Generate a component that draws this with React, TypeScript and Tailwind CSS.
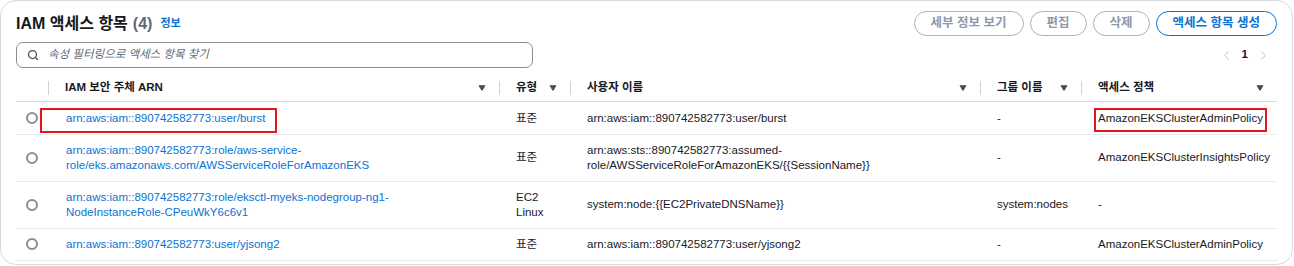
import React from 'react';
import { Search, ChevronLeft, ChevronRight } from 'lucide-react';

const cols = 'grid grid-cols-[32px_451px_71px_410px_101px_1fr]';

const SortIcon = () => (
  <svg width="8" height="8" viewBox="0 0 8 8" className="shrink-0">
    <polygon points="1.2,1.8 6.8,1.8 4,6.2" fill="#414d5c" stroke="#414d5c" strokeWidth="1.1" strokeLinejoin="round" />
  </svg>
);

const HeaderCell = ({ label, sortable = true }: { label: string; sortable?: boolean }) => (
  <div className="flex items-center">
    <span className="h-[14px] w-px bg-[#d1d5db]" />
    <span className="flex-1 pl-4 font-bold text-[#16191f]">{label}</span>
    {sortable && <span className="mr-[13px] flex"><SortIcon /></span>}
  </div>
);

const rows = [
  {
    arn: ['arn:aws:iam::890742582773:user/burst'],
    type: ['표준'],
    user: ['arn:aws:iam::890742582773:user/burst'],
    group: '-',
    policy: 'AmazonEKSClusterAdminPolicy',
  },
  {
    arn: ['arn:aws:iam::890742582773:role/aws-service-', 'role/eks.amazonaws.com/AWSServiceRoleForAmazonEKS'],
    type: ['표준'],
    user: ['arn:aws:sts::890742582773:assumed-', 'role/AWSServiceRoleForAmazonEKS/{{SessionName}}'],
    group: '-',
    policy: 'AmazonEKSClusterInsightsPolicy',
  },
  {
    arn: ['arn:aws:iam::890742582773:role/eksctl-myeks-nodegroup-ng1-', 'NodeInstanceRole-CPeuWkY6c6v1'],
    type: ['EC2', 'Linux'],
    user: ['system:node:{{EC2PrivateDNSName}}'],
    group: 'system:nodes',
    policy: '-',
  },
  {
    arn: ['arn:aws:iam::890742582773:user/yjsong2'],
    type: ['표준'],
    user: ['arn:aws:iam::890742582773:user/yjsong2'],
    group: '-',
    policy: 'AmazonEKSClusterAdminPolicy',
  },
];

const Lines = ({ lines }: { lines: string[] }) => (
  <div>
    {lines.map((l, i) => (
      <div key={i}>{l}</div>
    ))}
  </div>
);

export default function App() {
  return (
    <div
      className="relative h-[265px] w-[1293px] overflow-hidden rounded-[16px] border border-[#d5dbdb] bg-white px-[15px] pt-[10px] text-[11.5px] text-[#16191f]"
      style={{ fontFamily: '"Liberation Sans", "Noto Sans CJK KR", sans-serif' }}
    >
      {/* title */}
      <div className="flex h-[25px] items-center justify-between">
        <div className="flex items-center">
          <h2 className="text-[16px] font-bold leading-none text-[#16191f]">IAM 액세스 항목</h2>
          <span className="ml-[5px] text-[16px] font-bold leading-none text-[#5f6b7a]">(4)</span>
          <a className="ml-[8px] text-[11px] font-bold text-[#0972d3]">정보</a>
        </div>
        <div className="flex items-center gap-[6px]">
          {['세부 정보 보기', '편집', '삭제'].map((b) => (
            <button key={b} className="h-[25px] rounded-full border border-[#a8b1bd] px-[16px] text-[12.5px] font-bold text-[#8d99a8]">
              {b}
            </button>
          ))}
          <button className="h-[25px] rounded-full border-[1.5px] border-[#0972d3] px-[16px] text-[12.5px] font-bold text-[#0972d3]">
            액세스 항목 생성
          </button>
        </div>
      </div>

      {/* search + pagination */}
      <div className="mt-[6px] flex h-[26px] items-center justify-between">
        <div className="flex h-[26px] w-[517px] items-center rounded-[7px] border border-[#8c8c94] pl-[10px]">
          <Search size={12} strokeWidth={2.5} color="#414d5c" />
          <span className="ml-[9px] italic text-[#5f6b7a]">속성 필터링으로 액세스 항목 찾기</span>
        </div>
        <div className="mr-[6px] flex items-center gap-[8px]">
          <ChevronLeft size={15} strokeWidth={1.5} color="#b4bbc4" />
          <span className="font-bold text-[#16191f]">1</span>
          <ChevronRight size={15} strokeWidth={1.5} color="#b4bbc4" />
        </div>
      </div>

      {/* table header */}
      <div className={`${cols} mt-[6px] h-[28px] border-b border-[#d5dbdb]`}>
        <div />
        <HeaderCell label="IAM 보안 주체 ARN" />
        <HeaderCell label="유형" />
        <HeaderCell label="사용자 이름" />
        <HeaderCell label="그룹 이름" />
        <HeaderCell label="액세스 정책" />
      </div>

      {/* table rows */}
      {rows.map((r, i) => (
        <div key={i} className={`${cols} border-b border-[#e9ebed] py-[8.5px] leading-[14.5px] last:border-b-0`}>
          <div className="flex items-center justify-center">
            <span className="h-[12px] w-[12px] rounded-full border-2 border-[#8c8c94]" />
          </div>
          <div className="flex items-center pl-[18px] text-[#0972d3]">
            <Lines lines={r.arn} />
          </div>
          <div className="flex items-center pl-[17px]">
            <Lines lines={r.type} />
          </div>
          <div className="flex items-center pl-[17px]">
            <Lines lines={r.user} />
          </div>
          <div className="flex items-center pl-[17px]">{r.group}</div>
          <div className="flex items-center pl-[17px]">{r.policy}</div>
        </div>
      ))}

      {/* red highlight boxes drawn over the table */}
      <div className="pointer-events-none absolute left-[39px] top-[107px] h-[25px] w-[237px] border-2 border-[#e3161e]" />
      <div className="pointer-events-none absolute left-[1093px] top-[107px] h-[24px] w-[173px] border-2 border-[#e3161e]" />
    </div>
  );
}
